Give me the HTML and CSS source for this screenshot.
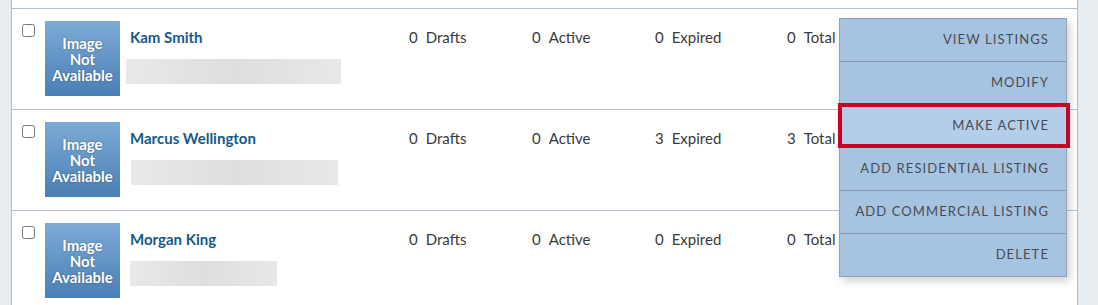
FILE: index.html
```html
<!DOCTYPE html>
<html lang="en">
<head>
  <meta charset="UTF-8" />
  <title>Agents</title>
  <link rel="stylesheet" href="styles.css">
</head>
<body>
  <div class="page">
    <div class="side-left"></div>
    <div class="content">
      <div class="row">
        <input type="checkbox" class="pick">
        <div class="thumb">Image<br>Not<br>Available</div>
        <div class="info">
          <a class="name" href="#">Kam Smith</a>
          <div class="blur" style="width:215px"></div>
        </div>
        <div class="stat"><span>0</span>Drafts</div>
        <div class="stat"><span>0</span>Active</div>
        <div class="stat"><span>0</span>Expired</div>
        <div class="stat"><span>0</span>Total</div>
      </div>
      <div class="row">
        <input type="checkbox" class="pick">
        <div class="thumb">Image<br>Not<br>Available</div>
        <div class="info">
          <a class="name" href="#">Marcus Wellington</a>
          <div class="blur" style="width:207px;margin-left:1px"></div>
        </div>
        <div class="stat"><span>0</span>Drafts</div>
        <div class="stat"><span>0</span>Active</div>
        <div class="stat"><span>3</span>Expired</div>
        <div class="stat"><span>3</span>Total</div>
      </div>
      <div class="row">
        <input type="checkbox" class="pick">
        <div class="thumb">Image<br>Not<br>Available</div>
        <div class="info">
          <a class="name" href="#">Morgan King</a>
          <div class="blur" style="width:147px;margin-left:0"></div>
        </div>
        <div class="stat"><span>0</span>Drafts</div>
        <div class="stat"><span>0</span>Active</div>
        <div class="stat"><span>0</span>Expired</div>
        <div class="stat"><span>0</span>Total</div>
      </div>

      <ul class="menu">
        <li>View Listings</li>
        <li>Modify</li>
        <li class="current">Make Active</li>
        <li>Add Residential Listing</li>
        <li>Add Commercial Listing</li>
        <li>Delete</li>
      </ul>
    </div>
    <div class="side-right"></div>
  </div>
</body>
</html>
```

FILE: styles.css
```css
body {
  margin: 0;
  font-family: Lato, "Noto Sans", sans-serif;
  background: #fff;
  color: #333;
}

.page {
  display: flex;
  height: 305px;
  overflow: hidden;
}

.side-left {
  width: 11px;
  background: #e8edf2;
  border-right: 1px solid #aebccb;
}

.side-right {
  width: 20px;
  background: #e8edf2;
  border-left: 1px solid #aebccb;
}

.content {
  flex: 1;
  position: relative;
  padding-top: 8px;
}

.row {
  display: grid;
  grid-template-columns: 23px 85px 279px 123px 123px 132px 1fr;
  align-items: start;
  height: 100px;
  padding-left: 10px;
  border-top: 1px solid #b3c0ce;
}

.pick {
  width: 13px;
  height: 13px;
  margin: 15px 0 0;
}

.thumb {
  width: 75px;
  height: 75px;
  margin-top: 12px;
  background: linear-gradient(#7cabd6, #4a7fb4);
  color: #fff;
  font-weight: bold;
  font-size: 15px;
  line-height: 16px;
  text-align: center;
  display: flex;
  align-items: center;
  justify-content: center;
  text-shadow: 0 0 2px rgba(0,0,0,0.35);
}

.info {
  padding-top: 18px;
}

.name {
  display: block;
  color: #145a8c;
  font-weight: bold;
  font-size: 15px;
  text-decoration: none;
  line-height: 20px;
}

.blur {
  height: 25px;
  margin-top: 12px;
  margin-left: -4px;
  background: linear-gradient(90deg, #e9e9e9, #dedede 50%, #e8e8e8);
}

.stat {
  padding-top: 18px;
  font-size: 15px;
  line-height: 20px;
  color: #3a3a3a;
}

.stat span {
  margin-right: 8px;
}

.menu {
  position: absolute;
  top: 18px;
  left: 827px;
  width: 226px;
  margin: 0;
  padding: 0;
  list-style: none;
  background: #a7c3e2;
  border: 1px solid #8ea2b8;
  box-shadow: 3px 4px 8px rgba(0,0,0,0.18);
}

.menu li {
  height: 42px;
  line-height: 41px;
  padding-right: 17px;
  text-align: right;
  text-transform: uppercase;
  font-size: 13px;
  letter-spacing: 1.1px;
  color: #474c52;
  border-top: 1px solid #8397ae;
}

.menu li:first-child {
  border-top: none;
}

.menu li.current {
  background: #b4cde8;
  outline: 4px solid #cc0022;
  outline-offset: -3px;
  position: relative;
  margin: 0 -3px 0 -1px;
  padding-right: 20px;
}
```
